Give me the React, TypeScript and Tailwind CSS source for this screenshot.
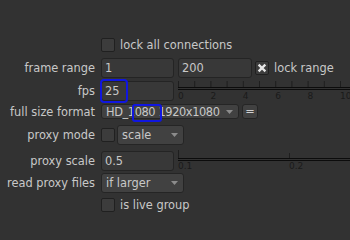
import React from 'react';

const Label: React.FC<{ text: string }> = ({ text }) => (
  <div className="w-[95px] shrink-0 text-right whitespace-nowrap pt-[2px]">{text}</div>
);

const CheckBox: React.FC<{ checked?: boolean }> = ({ checked }) => (
  <div className="w-[14px] h-[14px] shrink-0 bg-[#3c3c3c] border border-[#202020] rounded-[2px] flex items-center justify-center">
    {checked && (
      <svg width="10" height="10" viewBox="0 0 10 10">
        <path d="M2.5 2.5 L7.5 7.5 M7.5 2.5 L2.5 7.5" stroke="#e6e6e6" strokeWidth="2.4" strokeLinecap="square" />
      </svg>
    )}
  </div>
);

const Field: React.FC<{ value: string; w: string }> = ({ value, w }) => (
  <div className={`${w} h-[20px] shrink-0 bg-[#383838] border border-[#242424] rounded-[3px] pl-[3px] pt-[2px] flex items-center`}>
    {value}
  </div>
);

const Arrow = () => (
  <svg width="7" height="4" viewBox="0 0 7 4" className="shrink-0">
    <polygon points="0,0 7,0 3.5,4" fill="#8c8c8c" />
  </svg>
);

const Dropdown: React.FC<{ value: string; w: string; h?: string; tight?: boolean }> = ({ value, w, h = 'h-[20px]', tight }) => (
  <div className={`${w} ${h} shrink-0 bg-[#414141] border border-[#252525] rounded-[3px] pl-[4px] pr-[5px] flex items-center justify-between`}>
    <span className={`whitespace-nowrap pt-[2px] ${tight ? 'tracking-[-0.4px]' : ''}`}>{value}</span>
    <Arrow />
  </div>
);

const FpsRuler = () => {
  const step = 16.2;
  return (
    <svg width="180" height="20" className="shrink-0 overflow-visible">
      {Array.from({ length: 11 }).map((_, k) => (
        <line key={k} x1={k * step + 0.5} y1={0} x2={k * step + 0.5} y2={6} stroke="#1e1e1e" strokeWidth="1" />
      ))}
      <line x1="0" y1="6.5" x2="180" y2="6.5" stroke="#0c0c0c" strokeWidth="1" />
      <line x1="0" y1="8.5" x2="180" y2="8.5" stroke="#0c0c0c" strokeWidth="1" />
      {[0, 2, 4, 6, 8, 10].map((v) => (
        <text key={v} x={v * step} y={18} fontSize="9" fill="#1a1a1a" fontFamily="'DejaVu Sans', sans-serif">
          {v}
        </text>
      ))}
    </svg>
  );
};

const ScaleRuler = () => (
  <svg width="180" height="20" className="shrink-0 overflow-visible">
    <line x1="0.5" y1="-1" x2="0.5" y2="7" stroke="#1e1e1e" strokeWidth="1" />
    <line x1="111.5" y1="2" x2="111.5" y2="7" stroke="#1e1e1e" strokeWidth="1" />
    <line x1="0" y1="7.5" x2="180" y2="7.5" stroke="#0c0c0c" strokeWidth="1" />
    <line x1="0" y1="9.5" x2="180" y2="9.5" stroke="#0c0c0c" strokeWidth="1" />
    <text x="0" y="17.5" fontSize="9" fill="#1a1a1a" fontFamily="'DejaVu Sans', sans-serif">0.1</text>
    <text x="111" y="17.5" fontSize="9" fill="#1a1a1a" fontFamily="'DejaVu Sans', sans-serif">0.2</text>
  </svg>
);

export default function App() {
  return (
    <div
      className="relative w-[350px] h-[240px] overflow-hidden bg-[#323232] text-[#c8c8c8] text-[11.4px] leading-none"
      style={{ fontFamily: "'DejaVu Sans', 'Liberation Sans', sans-serif" }}
    >
      <div className="flex flex-col pt-[38px]">
        <div className="flex items-center h-[14px] pl-[101px] gap-[5px]">
          <CheckBox />
          <span className="whitespace-nowrap pt-[2px]">lock all connections</span>
        </div>

        <div className="flex items-center mt-[6px] h-[20px]">
          <Label text="frame range" />
          <div className="ml-[6px] flex items-center">
            <Field value="1" w="w-[73px]" />
            <div className="ml-[4px]"><Field value="200" w="w-[74px]" /></div>
            <div className="ml-[3px]"><CheckBox checked /></div>
            <span className="ml-[5px] whitespace-nowrap pt-[2px]">lock range</span>
          </div>
        </div>

        <div className="flex items-center mt-[3px] h-[20px]">
          <Label text="fps" />
          <div className="ml-[6px] flex items-center">
            <Field value="25" w="w-[73px]" />
            <div className="ml-[4px] h-[20px]"><FpsRuler /></div>
          </div>
        </div>

        <div className="flex items-center mt-[3px] h-[15px]">
          <Label text="full size format" />
          <div className="ml-[6px] flex items-center">
            <Dropdown value="HD_1080 1920x1080" w="w-[138px]" h="h-[15px]" tight />
            <div className="ml-[3px] w-[16px] h-[15px] bg-[#414141] border border-[#252525] rounded-[3px] flex items-center justify-center text-[#d0d0d0] pt-[1px]">
              =
            </div>
          </div>
        </div>

        <div className="flex items-center mt-[6px] h-[20px]">
          <Label text="proxy mode" />
          <div className="ml-[6px] flex items-center">
            <CheckBox />
            <div className="ml-[2px]"><Dropdown value="scale" w="w-[67px]" /></div>
          </div>
        </div>

        <div className="flex items-center mt-[6px] h-[20px]">
          <Label text="proxy scale" />
          <div className="ml-[6px] flex items-center">
            <Field value="0.5" w="w-[73px]" />
            <div className="ml-[4px] h-[20px]"><ScaleRuler /></div>
          </div>
        </div>

        <div className="flex items-center mt-[2px] h-[20px]">
          <Label text="read proxy files" />
          <div className="ml-[6px]"><Dropdown value="if larger" w="w-[83px]" /></div>
        </div>

        <div className="flex items-center mt-[5px] h-[14px] pl-[101px] gap-[5px]">
          <CheckBox />
          <span className="whitespace-nowrap pt-[2px]">is live group</span>
        </div>
      </div>

      <div className="absolute left-[100px] top-[79px] w-[28px] h-[24px] border-2 border-[#1016e0] rounded-[4px]" />
      <div className="absolute left-[132px] top-[104px] w-[30px] h-[18px] border-2 border-[#1016e0] rounded-[3px]" />
    </div>
  );
}
